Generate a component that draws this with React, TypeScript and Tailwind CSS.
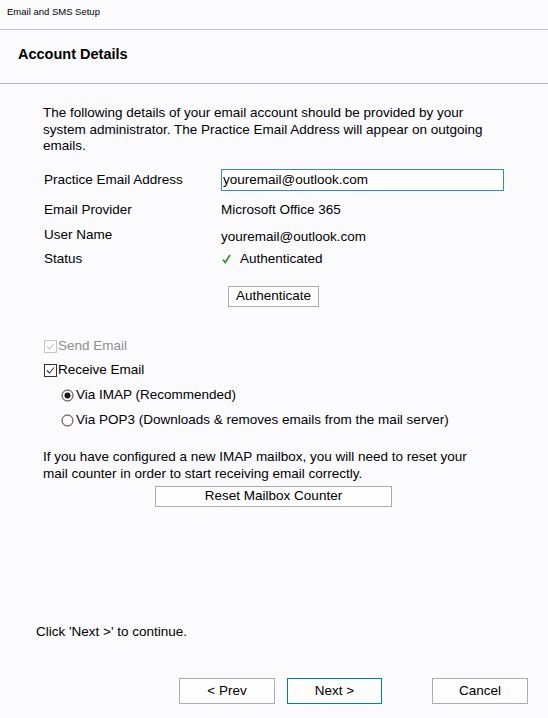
import React from "react";

function CheckBox({ disabled }: { disabled?: boolean }) {
  const c = disabled ? "#c4c4c4" : "#333333";
  return (
    <svg width="13" height="13" viewBox="0 0 13 13" className="shrink-0">
      <rect x="0.5" y="0.5" width="12" height="12" fill="#ffffff" stroke={c} />
      <path d="M3 6.5 L5.5 9 L10 3.5" fill="none" stroke={c} strokeWidth="1.1" />
    </svg>
  );
}

function Radio({ checked }: { checked?: boolean }) {
  return (
    <svg width="13" height="13" viewBox="0 0 13 13" className="shrink-0">
      <circle cx="6.5" cy="6.5" r="5.5" fill="#ffffff" stroke="#333333" />
      {checked && <circle cx="6.5" cy="6.5" r="3" fill="#1a1a1a" />}
    </svg>
  );
}

function GreenCheck() {
  return (
    <svg width="9" height="10" viewBox="0 0 9 10" className="shrink-0">
      <path d="M1 5.5 L3.2 8.5 L8 1" fill="none" stroke="#2f9a2f" strokeWidth="1.8" />
    </svg>
  );
}

export default function App() {
  const font = { fontFamily: '"Liberation Sans", Arial, sans-serif' };
  const base = "flex items-center justify-center bg-[#fdfdfd] text-[13.5px] text-black border";
  const btn = `${base} border-[#adadad]`;

  return (
    <div
      className="w-[548px] h-[718px] flex flex-col bg-[#fbfbfe] text-black text-[13.5px] overflow-hidden"
      style={font}
    >
      <div className="h-[30px] border-b border-[#c3c3c3] pl-[7px] pt-[5px] text-[9.5px] leading-[14px]">
        Email and SMS Setup
      </div>
      <div className="h-[54px] border-b border-[#b9b9b9] pl-[18px] pt-[16px] text-[14.5px] leading-[16px] font-bold">
        Account Details
      </div>

      <div className="flex flex-col flex-1 pl-[43px] pt-[21px]">
        <p className="w-[447px] leading-[16.5px]">
          The following details of your email account should be provided by your system
          administrator. The Practice Email Address will appear on outgoing emails.
        </p>

        <div className="flex items-center h-[22px] mt-[14.5px] pl-[1px]">
          <div className="w-[177px]">Practice Email Address</div>
          <div className="flex items-center w-[283px] h-[22px] border border-[#3c83e0] bg-white pl-[1px]">
            youremail@outlook.com
          </div>
        </div>

        <div className="flex h-[16px] leading-[16px] mt-[11px] pl-[1px]">
          <div className="w-[177px]">Email Provider</div>
          <div>Microsoft Office 365</div>
        </div>

        <div className="flex h-[18px] leading-[16px] mt-[9px] pl-[1px]">
          <div className="w-[177px]">User Name</div>
          <div className="mt-[2px]">youremail@outlook.com</div>
        </div>

        <div className="flex h-[16px] leading-[16px] mt-[6px] pl-[1px]">
          <div className="w-[177px]">Status</div>
          <div className="flex items-center gap-[9px] pl-[1px]">
            <GreenCheck />
            <span>Authenticated</span>
          </div>
        </div>

        <div className="flex justify-center w-[461px] mt-[19px]">
          <button className={`${btn} w-[91px] h-[21px]`}>Authenticate</button>
        </div>

        <label className="flex items-center gap-[1px] h-[16px] mt-[31px] pl-[1px] text-[#8e8e8e]">
          <CheckBox disabled />
          <span>Send Email</span>
        </label>
        <label className="flex items-center gap-[1px] h-[16px] mt-[8px] pl-[1px]">
          <CheckBox />
          <span>Receive Email</span>
        </label>
        <label className="flex items-center gap-[2px] h-[16px] mt-[9px] pl-[18px]">
          <Radio checked />
          <span>Via IMAP (Recommended)</span>
        </label>
        <label className="flex items-center gap-[2px] h-[16px] mt-[9px] pl-[18px]">
          <Radio />
          <span>Via POP3 (Downloads &amp; removes emails from the mail server)</span>
        </label>

        <p className="w-[447px] leading-[17px] mt-[19.5px]">
          If you have configured a new IMAP mailbox, you will need to reset your mail counter
          in order to start receiving email correctly.
        </p>

        <div className="flex justify-center w-[461px] mt-[4.5px]">
          <button className={`${btn} w-[237px] h-[21px]`}>Reset Mailbox Counter</button>
        </div>

        <div className="flex-1" />

        <p className="-ml-[7px] leading-[16px]">Click 'Next &gt;' to continue.</p>
      </div>

      <div className="flex items-center mt-[38px] mb-[14px] pl-[179px]">
        <button className={`${btn} w-[96px] h-[26px]`}>&lt; Prev</button>
        <button className={`${base} border-[#0078d7] w-[95px] h-[26px] ml-[12px]`}>Next &gt;</button>
        <button className={`${btn} w-[96px] h-[26px] ml-[50px]`}>Cancel</button>
      </div>
    </div>
  );
}
